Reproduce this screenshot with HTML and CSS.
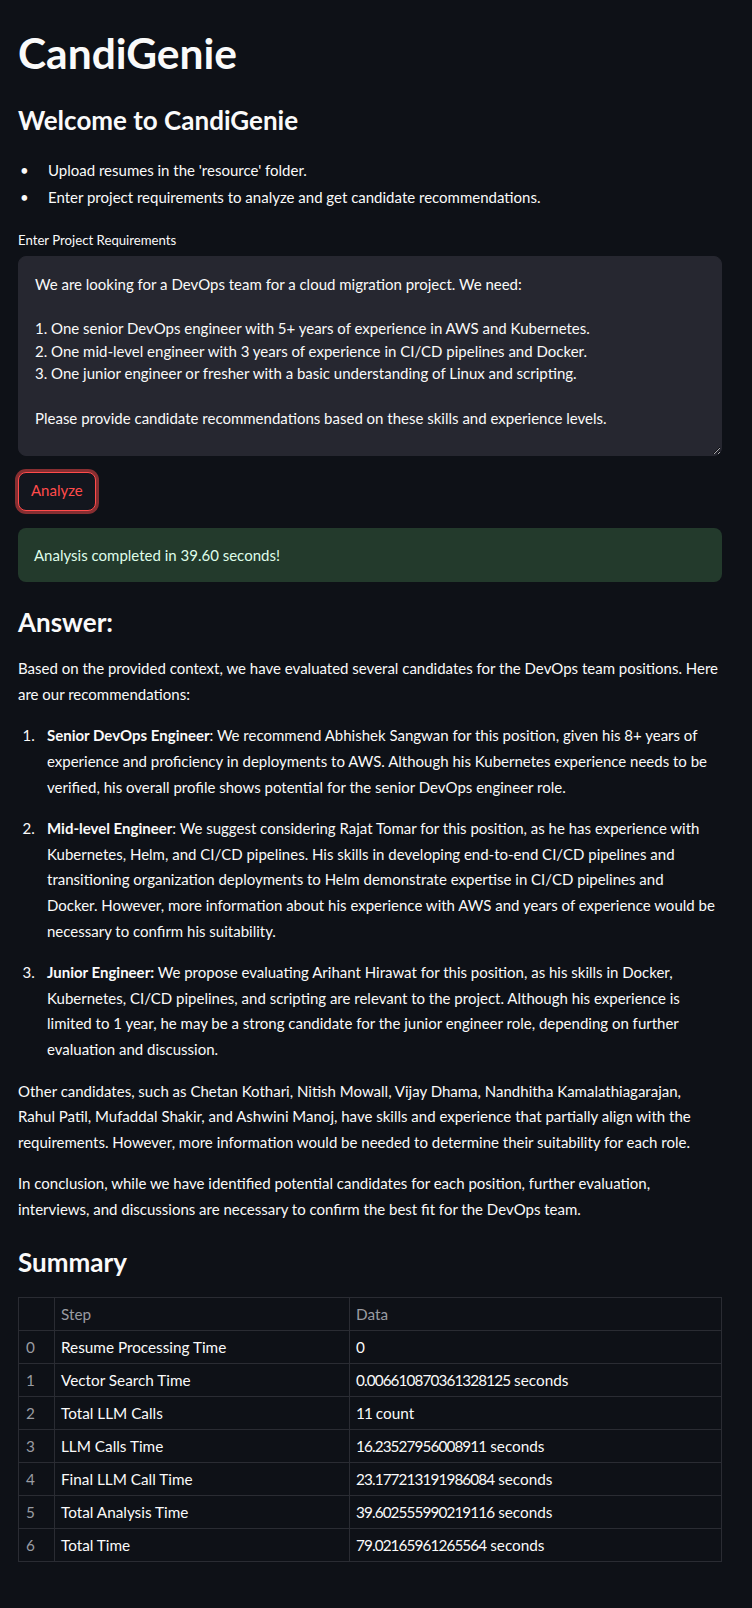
FILE: index.html
```html
<!DOCTYPE html>
<html lang="en">
<head>
<meta charset="utf-8">
<title>CandiGenie</title>
<link rel="stylesheet" href="styles.css">
</head>
<body>
<main class="page">
  <h1 class="title">CandiGenie</h1>
  <h2 class="heading heading-welcome">Welcome to CandiGenie</h2>
  <ul class="bullets">
    <li class="bullet">Upload resumes in the 'resource' folder.</li>
    <li class="bullet">Enter project requirements to analyze and get candidate recommendations.</li>
  </ul>
  <label class="field-label" for="req">Enter Project Requirements</label>
  <textarea id="req" class="req-input">We are looking for a DevOps team for a cloud migration project. We need:

1. One senior DevOps engineer with 5+ years of experience in AWS and Kubernetes.
2. One mid-level engineer with 3 years of experience in CI/CD pipelines and Docker.
3. One junior engineer or fresher with a basic understanding of Linux and scripting.

Please provide candidate recommendations based on these skills and experience levels.</textarea>
  <div class="btn-row"><button class="btn" type="button">Analyze</button></div>
  <div class="alert-success">Analysis completed in 39.60 seconds!</div>
  <h2 class="heading heading-answer">Answer:</h2>
  <p class="para">Based on the provided context, we have evaluated several candidates for the DevOps team positions. Here are our recommendations:</p>
  <ol class="recs">
    <li class="rec"><strong>Senior DevOps Engineer</strong>: We recommend Abhishek Sangwan for this position, given his 8+ years of experience and proficiency in deployments to AWS. Although his Kubernetes experience needs to be verified, his overall profile shows potential for the senior DevOps engineer role.</li>
    <li class="rec"><strong>Mid-level Engineer</strong>: We suggest considering Rajat Tomar for this position, as he has experience with Kubernetes, Helm, and CI/CD pipelines. His skills in developing end-to-end CI/CD pipelines and transitioning organization deployments to Helm demonstrate expertise in CI/CD pipelines and<br>Docker. However, more information about his experience with AWS and years of experience would be necessary to confirm his suitability.</li>
    <li class="rec"><strong>Junior Engineer:</strong> We propose evaluating Arihant Hirawat for this position, as his skills in Docker, Kubernetes, CI/CD pipelines, and scripting are relevant to the project. Although his experience is limited to 1 year, he may be a strong candidate for the junior engineer role, depending on further evaluation and discussion.</li>
  </ol>
  <p class="para">Other candidates, such as Chetan Kothari, Nitish Mowall, Vijay Dhama, Nandhitha Kamalathiagarajan,<br>Rahul Patil, Mufaddal Shakir, and Ashwini Manoj, have skills and experience that partially align with the requirements. However, more information would be needed to determine their suitability for each role.</p>
  <p class="para">In conclusion, while we have identified potential candidates for each position, further evaluation, interviews, and discussions are necessary to confirm the best fit for the DevOps team.</p>
  <h2 class="heading heading-summary">Summary</h2>
  <table class="grid">
    <colgroup>
      <col class="col-idx">
      <col class="col-step">
      <col class="col-data">
    </colgroup>
    <thead>
      <tr><th class="idx"></th><th>Step</th><th>Data</th></tr>
    </thead>
    <tbody>
      <tr><td class="idx">0</td><td>Resume Processing Time</td><td><span class="num">0</span></td></tr>
      <tr><td class="idx">1</td><td>Vector Search Time</td><td><span class="num">0.006610870361328125</span> seconds</td></tr>
      <tr><td class="idx">2</td><td>Total LLM Calls</td><td><span class="num">11</span> count</td></tr>
      <tr><td class="idx">3</td><td>LLM Calls Time</td><td><span class="num">16.23527956008911</span> seconds</td></tr>
      <tr><td class="idx">4</td><td>Final LLM Call Time</td><td><span class="num">23.177213191986084</span> seconds</td></tr>
      <tr><td class="idx">5</td><td>Total Analysis Time</td><td><span class="num">39.602555990219116</span> seconds</td></tr>
      <tr><td class="idx">6</td><td>Total Time</td><td><span class="num">79.02165961265564</span> seconds</td></tr>
    </tbody>
  </table>
</main>
</body>
</html>
```

FILE: styles.css
```css
html, body {
  margin: 0;
  padding: 0;
  background: #0e1117;
}
body {
  color: #fafafa;
  font-family: "Lato", "Noto Sans", sans-serif;
  font-size: 15px;
  line-height: 25.6px;
}
.page {
  padding: 27px 30px 40px 18px;
}
.title {
  margin: 0;
  font-size: 42.5px;
  font-weight: 700;
  line-height: 1.2;
}
.heading {
  margin: 0;
  font-size: 26px;
  font-weight: 700;
  line-height: 1.2;
}
.heading-welcome { margin-top: 27px; }
.heading-answer { margin-top: 25px; margin-bottom: 18px; }
.heading-summary { margin-top: 24.5px; margin-bottom: 18.5px; }

.bullets {
  margin: 22px 0 0 0;
  padding: 0 0 0 30px;
  list-style: none;
}
.bullet { margin-bottom: 1.4px; }
.bullet::before {
  content: "\2022";
  display: inline-block;
  width: 28px;
  margin-left: -28px;
}

.field-label {
  display: block;
  margin-top: 18.5px;
  font-size: 13.2px;
  line-height: 22.4px;
}
.req-input {
  display: block;
  box-sizing: border-box;
  width: 100%;
  height: 200px;
  margin: 4px 0 0 0;
  padding: 16px;
  border: 1px solid #262730;
  border-radius: 8px;
  background: #262730;
  color: #fafafa;
  font-family: inherit;
  font-size: 15px;
  line-height: 22.4px;
  resize: vertical;
  color-scheme: dark;
  overflow: hidden;
  outline: none;
}
.btn-row { margin-top: 16px; }
.btn {
  display: inline-flex;
  align-items: center;
  box-sizing: border-box;
  height: 39px;
  padding: 0 12px;
  border: 1px solid #ff4b4b;
  border-radius: 8px;
  background: #13161e;
  color: #ff4b4b;
  font-family: inherit;
  font-size: 15px;
  line-height: 25.6px;
  box-shadow: 0 0 0 3px rgba(255, 75, 75, 0.5);
}
.alert-success {
  margin-top: 17px;
  padding: 16px;
  border-radius: 8px;
  background: #233a2c;
  color: #dffde9;
  line-height: 22.4px;
}
.para { margin: 0 0 16px 0; }
.recs {
  margin: 0;
  padding: 0 0 0 29px;
  list-style: none;
  counter-reset: rec;
}
.rec {
  margin-bottom: 16px;
  counter-increment: rec;
}
.rec::before {
  content: counter(rec) ".";
  display: inline-block;
  width: 24px;
  margin-left: -24.5px;
  margin-right: 0.5px;
}
.rec strong { font-weight: 700; }

.grid {
  width: 100%;
  table-layout: fixed;
  border-collapse: collapse;
  font-size: 15.3px;
  line-height: 1.2;
}
.col-idx { width: 36px; }
.col-step { width: 295px; }
.grid th, .grid td {
  height: 33px;
  box-sizing: border-box;
  padding: 0 6px;
  border: 1px solid #2a2c33;
  text-align: left;
  font-weight: 400;
  white-space: nowrap;
}
.grid th { color: #9a9ca2; }
.grid .idx { color: #9a9ca2; padding-left: 7px; }
.num { letter-spacing: -0.9px; }
```
